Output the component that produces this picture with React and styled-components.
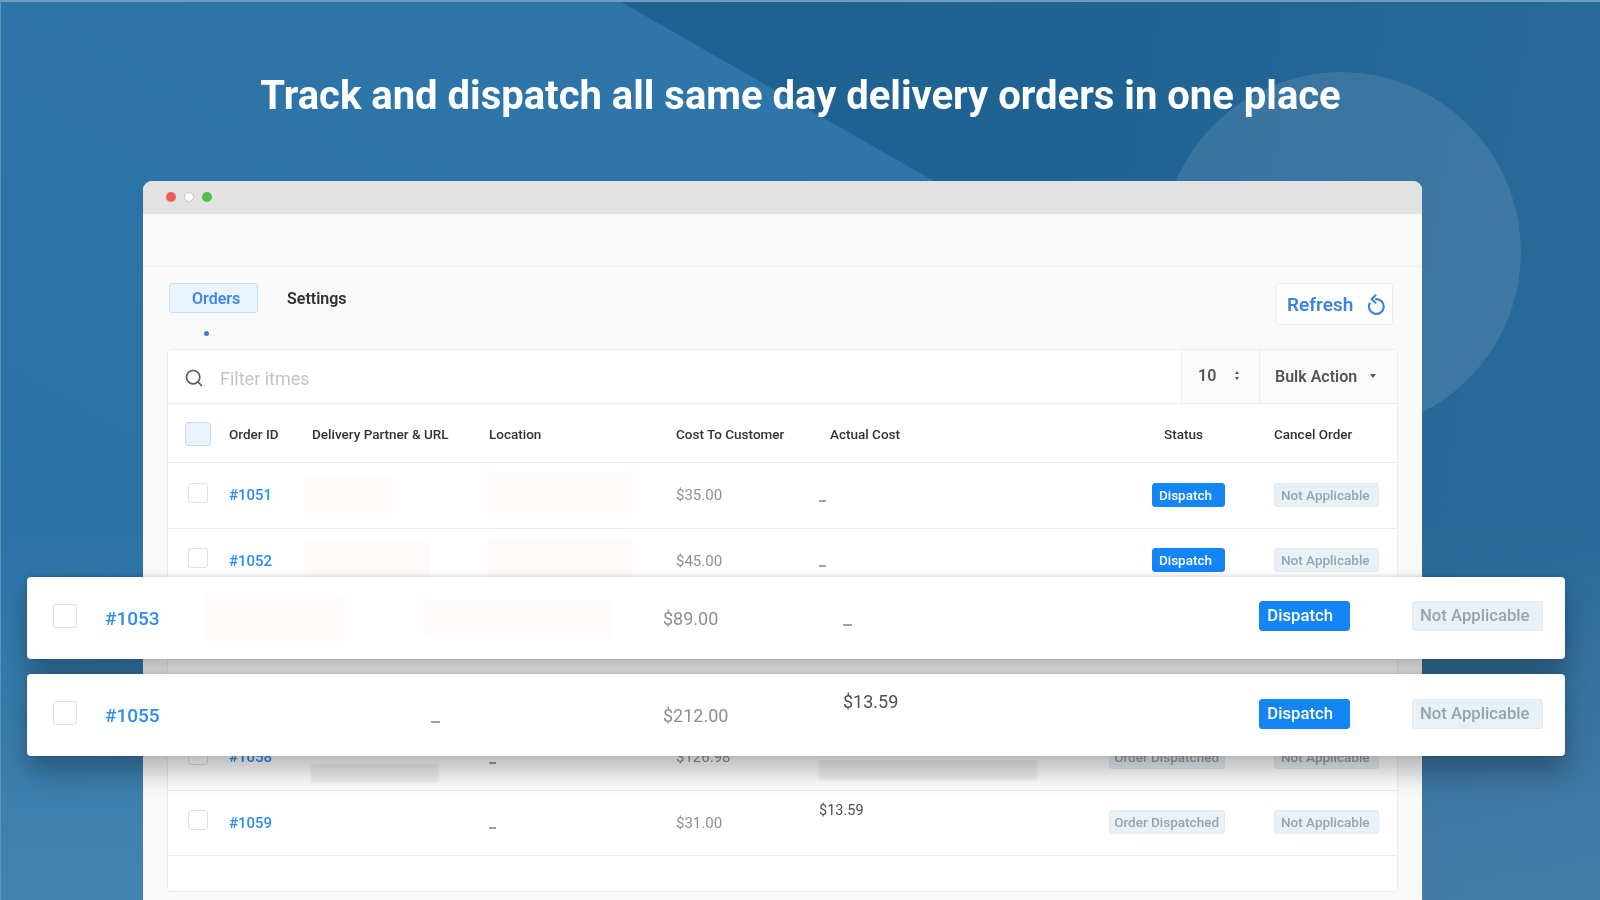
import React from "react";
import styled, { createGlobalStyle } from "styled-components";
import { Search } from "lucide-react";

const GlobalStyle = createGlobalStyle`
  html, body { margin: 0; padding: 0; }
  body { font-family: Roboto, "Liberation Sans", sans-serif; background: #2a72a6; }
`;

const Stage = styled.div`
  position: relative;
  width: 1600px;
  height: 900px;
  overflow: hidden;
  box-sizing: border-box;
  border-top: 2px solid #6f9cbd;
  border-left: 1px solid #5f93b8;
  background:
    linear-gradient(180deg, rgba(255,255,255,0) 0, rgba(255,255,255,0) 520px, rgba(255,255,255,.12) 880px),
    radial-gradient(circle 180px at 1340px 250px, rgba(255,255,255,.1) 179.5px, rgba(255,255,255,0) 180px),
    linear-gradient(29.8deg, #2871a5 0, #2e76a9 79%, rgba(0,0,0,0) 79.1%) 0 0 / 1200px 100% no-repeat,
    linear-gradient(100deg, #1e608f 0, #1f6392 60%, #2b6b9b 100%);
  filter: blur(0.35px);
`;

const Headline = styled.h1`
  margin: 0;
  height: 179px;
  padding-top: 66px;
  box-sizing: border-box;
  text-align: center;
  font-size: 40px;
  line-height: 56px;
  font-weight: 700;
  color: #fff;
`;

const Browser = styled.div`
  margin-left: 142px;
  width: 1279px;
  height: 740px;
  background: #f9f9f9;
  border-radius: 9px 9px 0 0;
  overflow: hidden;
`;

const TitleBar = styled.div`
  height: 33px;
  box-sizing: border-box;
  padding: 0 0 2px 23px;
  background: #e2e2e2;
  display: flex;
  align-items: center;
  gap: 8px;
`;

const Light = styled.span`
  width: 10px;
  height: 10px;
  border-radius: 50%;
  box-sizing: border-box;
  background: ${(p) => p.$color};
  border: ${(p) => (p.$ring ? "1px solid #c4c4c4" : "none")};
`;

const BlankBar = styled.div`
  height: 53px;
  box-sizing: border-box;
  border-bottom: 1px solid #f0f0f0;
`;

const TabRow = styled.div`
  height: 82px;
  box-sizing: border-box;
  padding: 16px 29px 0 26px;
  display: flex;
  justify-content: space-between;
  align-items: flex-start;
`;

const Tabs = styled.div`
  display: flex;
  align-items: center;
  gap: 29px;
`;

const TabActive = styled.div`
  position: relative;
  width: 89px;
  height: 30px;
  box-sizing: border-box;
  padding-left: 22px;
  display: flex;
  align-items: center;
  background: #e9f3fe;
  border: 1px solid #c9dff5;
  border-radius: 3px;
  font-size: 16px;
  font-weight: 600;
  color: #3f86e8;
  &::after {
    content: "";
    position: absolute;
    left: 34px;
    top: 47px;
    width: 5px;
    height: 5px;
    border-radius: 50%;
    background: #3b7fe6;
  }
`;

const TabPlain = styled.div`
  font-size: 16px;
  font-weight: 600;
  color: #303030;
`;

const RefreshButton = styled.div`
  width: 117px;
  height: 42px;
  box-sizing: border-box;
  padding-left: 10px;
  display: flex;
  align-items: center;
  gap: 15px;
  background: #fff;
  border: 1px solid #e8eef5;
  border-radius: 3px;
  font-size: 19px;
  font-weight: 600;
  color: #3b82e6;
`;

const Card = styled.div`
  margin: 0 24px;
  height: 543px;
  box-sizing: border-box;
  background: #fff;
  border: 1px solid #ececec;
  border-radius: 4px;
`;

const Toolbar = styled.div`
  height: 53px;
  display: flex;
  border-bottom: 1px solid #ececec;
`;

const SearchBox = styled.div`
  flex: 1;
  display: flex;
  align-items: center;
  gap: 16px;
  padding: 2px 0 0 16px;
  font-size: 18px;
  color: #c0c4c8;
  span { padding-top: 2px; }
  svg { color: #5c5c5c; }
`;

const PageSize = styled.div`
  width: 78px;
  box-sizing: border-box;
  background: #fafafa;
  border-left: 1px solid #ececec;
  display: flex;
  align-items: center;
  padding: 0 0 2px 16px;
  gap: 19px;
  font-size: 16px;
  font-weight: 600;
  color: #555;
`;

const BulkAction = styled.div`
  flex: none;
  width: 138px;
  box-sizing: border-box;
  background: #fafafa;
  border-left: 1px solid #ececec;
  display: flex;
  align-items: center;
  padding: 0 0 1px 15px;
  gap: 13px;
  font-size: 16px;
  font-weight: 600;
  color: #555;
`;

const Caret = styled.span`
  width: 0;
  height: 0;
  border-left: 3.5px solid transparent;
  border-right: 3.5px solid transparent;
  border-top: 4px solid #555;
`;

const UpDown = styled.span`
  display: flex;
  flex-direction: column;
  gap: 3px;
  &::before, &::after {
    content: "";
    width: 0;
    height: 0;
    border-left: 2.5px solid transparent;
    border-right: 2.5px solid transparent;
  }
  &::before { border-bottom: 3px solid #555; }
  &::after { border-top: 3px solid #555; }
`;

// check, id, partner, location, cost, actual, status, cancel
const columns = "61px 83px 177px 187px 143px 200px 206px 1fr";

const HeadRow = styled.div`
  height: 59px;
  box-sizing: border-box;
  padding-top: 2px;
  display: grid;
  grid-template-columns: ${columns};
  align-items: center;
  border-bottom: 1px solid #ececec;
  font-size: 13.5px;
  font-weight: 500;
  color: #333;
`;

const HeadBox = styled.span`
  display: block;
  width: 26px;
  height: 24px;
  margin-left: 17px;
  box-sizing: border-box;
  background: #eaf3fd;
  border: 1px solid #c9dcf2;
  border-radius: 3px;
`;

const HeadCell = styled.span`
  white-space: nowrap;
  padding-left: ${(p) => p.$left || 0}px;
  padding-right: ${(p) => p.$right || 0}px;
  text-align: ${(p) => (p.$end ? "right" : "left")};
`;

const TableRow = styled.div`
  height: 65.5px;
  box-sizing: border-box;
  display: grid;
  grid-template-columns: ${columns};
  align-items: center;
  border-bottom: 1px solid #ececec;
`;

const BlankRow = styled.div`
  height: 36px;
`;

const CheckBox = styled.span`
  display: block;
  box-sizing: border-box;
  background: #fff;
  border: 1px solid #d5e2f2;
  border-radius: 3px;
  margin-top: -5px;
  width: ${(p) => (p.$big ? 24 : 20)}px;
  height: ${(p) => (p.$big ? 24 : 20)}px;
  margin-left: ${(p) => (p.$big ? 26 : 20)}px;
`;

const OrderLink = styled.span`
  color: #2c8cf0;
  font-weight: 500;
  font-size: ${(p) => (p.$big ? 19 : 15)}px;
`;

const Cost = styled.span`
  color: #8c9094;
  font-size: ${(p) => (p.$big ? 18 : 15)}px;
`;

const Dash = styled.span`
  display: block;
  background: #a0a0a0;
  height: 2px;
  width: ${(p) => (p.$big ? 9 : 7)}px;
  margin-top: ${(p) => (p.$big ? 14 : 11)}px;
  margin-left: ${(p) => p.$x || 0}px;
`;

const Actual = styled.span`
  color: #4f4f4f;
  font-size: ${(p) => (p.$big ? 18 : 14.5)}px;
  margin-top: ${(p) => (p.$big ? -28 : -24)}px;
`;

const Patch = styled.span`
  display: block;
  background: ${(p) => (p.$grey ? "#f0f0f0" : "#fffbfa")};
  width: ${(p) => p.$w}px;
  height: ${(p) => p.$h}px;
  margin-left: ${(p) => p.$x || 0}px;
  margin-top: ${(p) => p.$y || 0}px;
  border-radius: 2px;
  filter: blur(1px);
`;

const StatusCell = styled.div`
  display: flex;
  justify-content: flex-end;
  margin-top: -1px;
`;

const CancelCell = styled.div`
  padding-left: 49px;
  margin-top: -1px;
`;

const Pill = styled.span`
  display: inline-flex;
  align-items: center;
  box-sizing: border-box;
  border-radius: 3px;
  font-weight: 500;
  white-space: nowrap;
  height: ${(p) => (p.$big ? 30 : 24)}px;
  font-size: ${(p) => (p.$big ? 16.7 : 13.5)}px;
  padding: ${(p) => p.$pad};
  background: ${(p) => (p.$primary ? "#1485f5" : "#e8f0f8")};
  color: ${(p) => (p.$primary ? "#fff" : "#9aa2ab")};
  border: 1px solid ${(p) => (p.$primary ? "#1485f5" : "#e1e9f2")};
`;

const FloatRow = styled.div`
  position: absolute;
  left: 26px;
  top: ${(p) => p.$top}px;
  width: 1538px;
  height: 82px;
  box-sizing: border-box;
  display: grid;
  grid-template-columns: 78px 99px 219px 240px 180px 250px 257px 1fr;
  align-items: center;
  background: #fff;
  border-radius: 4px;
  box-shadow: 0 16px 26px rgba(0, 0, 0, 0.28), 0 -1px 4px rgba(0, 0, 0, 0.14);
`;

const FloatPill = styled.div`
  display: flex;
  justify-content: ${(p) => (p.$end ? "flex-end" : "flex-start")};
  padding-left: ${(p) => (p.$end ? 0 : 62)}px;
  margin-top: ${(p) => p.$y}px;
`;

const RefreshIcon = () => (
  <svg width="18" height="21" viewBox="0 0 18 21" fill="none" stroke="#3b82e6" strokeWidth="2.1" strokeLinecap="round" strokeLinejoin="round">
    <path d="M8 5.1A7.4 7.4 0 1 1 1.6 9.5" />
    <path d="M7.5 1.3 3.6 5.2l3.9 3.5" />
  </svg>
);

const rows = [
  { id: "#1051", cost: "$35.00", patches: [[88, 36], [146, 41]], status: "Dispatch" },
  { id: "#1052", cost: "$45.00", patches: [[125, 37], [146, 40]], status: "Dispatch" },
  { id: "#1053", cost: "$89.00", status: "Dispatch" },
  { id: "#1055", cost: "$212.00", status: "Dispatch" },
  { id: "#1058", cost: "$126.98", status: "Order Dispatched", grey: true },
  { id: "#1059", cost: "$31.00", status: "Order Dispatched", actual: "$13.59" },
];

const Row = ({ row }) => (
  <TableRow>
    <CheckBox />
    <OrderLink>{row.id}</OrderLink>
    {row.patches ? (
      <Patch $w={row.patches[0][0]} $h={row.patches[0][1]} $x={-7} />
    ) : row.grey ? (
      <Patch $grey $w={128} $h={19} $y={32} $x={-1} />
    ) : (
      <span />
    )}
    {row.patches ? (
      <Patch $w={row.patches[1][0]} $h={row.patches[1][1]} $x={-2} $y={-5} />
    ) : (
      <Dash />
    )}
    <Cost>{row.cost}</Cost>
    {row.grey ? (
      <Patch $grey $w={218} $h={20} $y={26} />
    ) : row.actual ? (
      <Actual>{row.actual}</Actual>
    ) : (
      <Dash />
    )}
    <StatusCell>
      {row.status === "Dispatch" ? (
        <Pill $primary $pad="0 12px 0 6px">{row.status}</Pill>
      ) : (
        <Pill $pad="0 5px 0 4px">{row.status}</Pill>
      )}
    </StatusCell>
    <CancelCell>
      <Pill $pad="0 8px 0 6px">Not Applicable</Pill>
    </CancelCell>
  </TableRow>
);

const FloatButtons = ({ y }) => (
  <>
    <FloatPill $end $y={y}>
      <Pill $big $primary $pad="0 16px 0 7px">Dispatch</Pill>
    </FloatPill>
    <FloatPill $y={y}>
      <Pill $big $pad="0 13px 0 7px">Not Applicable</Pill>
    </FloatPill>
  </>
);

export default function App() {
  return (
    <>
      <GlobalStyle />
      <Stage>
        <Headline>Track and dispatch all same day delivery orders in one place</Headline>
        <Browser>
          <TitleBar>
            <Light $color="#ee5f57" />
            <Light $color="#fff" $ring />
            <Light $color="#55bd4d" />
          </TitleBar>
          <BlankBar />
          <TabRow>
            <Tabs>
              <TabActive>Orders</TabActive>
              <TabPlain>Settings</TabPlain>
            </Tabs>
            <RefreshButton>
              Refresh
              <RefreshIcon />
            </RefreshButton>
          </TabRow>
          <Card>
            <Toolbar>
              <SearchBox>
                <Search size={20} strokeWidth={2} />
                <span>Filter itmes</span>
              </SearchBox>
              <PageSize>
                10
                <UpDown />
              </PageSize>
              <BulkAction>
                Bulk Action
                <Caret />
              </BulkAction>
            </Toolbar>
            <HeadRow>
              <HeadBox />
              <HeadCell>Order ID</HeadCell>
              <HeadCell>Delivery Partner &amp; URL</HeadCell>
              <HeadCell>Location</HeadCell>
              <HeadCell>Cost To Customer</HeadCell>
              <HeadCell $left={11}>Actual Cost</HeadCell>
              <HeadCell $end $right={22}>Status</HeadCell>
              <HeadCell $left={49}>Cancel Order</HeadCell>
            </HeadRow>
            {rows.map((row) => (
              <Row key={row.id} row={row} />
            ))}
            <BlankRow />
          </Card>
        </Browser>

        <FloatRow $top={575}>
          <CheckBox $big />
          <OrderLink $big>#1053</OrderLink>
          <Patch $w={141} $h={45} />
          <Patch $w={188} $h={37} />
          <Cost $big>$89.00</Cost>
          <Dash $big />
          <FloatButtons y={-5} />
        </FloatRow>

        <FloatRow $top={672}>
          <CheckBox $big />
          <OrderLink $big>#1055</OrderLink>
          <span />
          <Dash $big $x={8} />
          <Cost $big>$212.00</Cost>
          <Actual $big>$13.59</Actual>
          <FloatButtons y={-3} />
        </FloatRow>
      </Stage>
    </>
  );
}
